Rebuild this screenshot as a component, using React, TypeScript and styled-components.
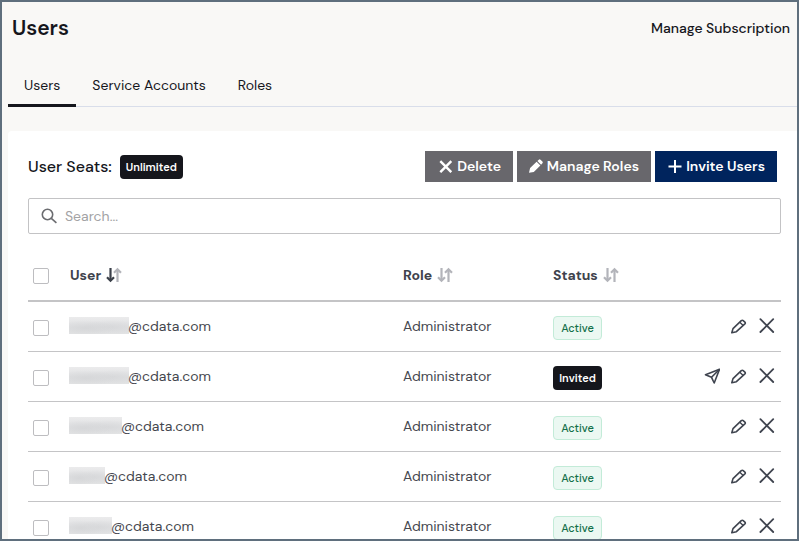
import React, { useState } from "react";
import styled, { createGlobalStyle, css } from "styled-components";

const GlobalStyle = createGlobalStyle`
  *, *::before, *::after { box-sizing: border-box; }
  body {
    margin: 0;
    background: #f9f8f6;
    color: #15161c;
    font: 400 14px/20px "DM Sans", Inter, sans-serif;
  }
  button, input { font: inherit; }
`;

const Frame = styled.div`
  height: 100vh;
  overflow: hidden;
  border: 2px solid #5f6f7d;
  padding-left: 6px;
  display: flex;
  flex-direction: column;
`;

const Header = styled.header`
  display: flex;
  align-items: center;
  justify-content: space-between;
  height: 52px;
  padding: 0 7px 0 4px;
  flex: none;
`;

const Title = styled.h1`
  margin: 0;
  font-size: 21px;
  line-height: 28px;
  font-weight: 600;
`;

const HeaderLink = styled.a`
  color: inherit;
  font-weight: 500;
  text-decoration: none;
`;

const Tabs = styled.nav`
  display: flex;
  flex: none;
  height: 53px;
  border-bottom: 1px solid #d9deea;
  margin-bottom: 24px;
`;

const Tab = styled.a<{ $active?: boolean }>`
  display: flex;
  align-items: center;
  height: 53px;
  padding: 12px 16px 0;
  color: inherit;
  text-decoration: none;
  border-bottom: 3px solid ${(p) => (p.$active ? "#15161c" : "transparent")};
`;

const Panel = styled.main`
  flex: 1 0 auto;
  background: #fff;
  border-top-left-radius: 4px;
  padding: 20px 16px 0 20px;
`;

const Toolbar = styled.div`
  display: flex;
  align-items: center;
  justify-content: space-between;
  padding-right: 4px;
  margin-bottom: 16px;
`;

const Seats = styled.div`
  display: flex;
  align-items: center;
  gap: 8px;
  font-size: 16px;
  font-weight: 500;
`;

const Badge = styled.span<{ $tone: "dark" | "green" }>`
  display: inline-flex;
  align-items: center;
  justify-content: center;
  height: 24px;
  padding: 0 6px;
  border-radius: 4px;
  font-size: 11px;
  line-height: 16px;
  ${(p) =>
    p.$tone === "dark"
      ? css`
          background: #15161c;
          color: #fff;
          font-weight: 600;
        `
      : css`
          background: #ebf8f2;
          color: #13704a;
          font-weight: 500;
          border: 1px solid #c3ebd8;
        `}
`;

const StatusBadge = styled(Badge)`
  min-width: 49px;
  vertical-align: middle;
`;

const SeatBadge = styled(Badge)`
  min-width: 63px;
`;

const Actions = styled.div`
  display: flex;
  gap: 4px;
`;

const ActionButton = styled.button<{ $width: number; $primary?: boolean }>`
  display: flex;
  align-items: center;
  justify-content: flex-end;
  gap: 4px;
  height: 31px;
  min-width: ${(p) => p.$width}px;
  padding: 0 12px 2px 8px;
  border: 0;
  color: #fff;
  font-weight: 600;
  white-space: nowrap;
  background: ${(p) => (p.$primary ? "#00245d" : "#68676c")};
  svg { flex: none; }
`;

const SearchBox = styled.label`
  display: flex;
  align-items: center;
  gap: 7px;
  height: 36px;
  padding: 0 12px;
  border: 1px solid #c3c3c5;
  border-radius: 2px;
  margin-bottom: 16px;
  color: #6b6c70;
`;

const SearchInput = styled.input`
  flex: 1;
  min-width: 0;
  border: 0;
  padding: 0;
  outline: 0;
  background: transparent;
  color: #15161c;
  &::placeholder { color: #a3a3a5; opacity: 1; }
`;

const Table = styled.table`
  width: 100%;
  table-layout: fixed;
  border-collapse: separate;
  border-spacing: 0;
  color: #46484f;
`;

const HeadCell = styled.th<{ $width?: number }>`
  height: 52px;
  width: ${(p) => (p.$width ? `${p.$width}px` : "auto")};
  padding: 0;
  text-align: left;
  font-weight: 700;
  color: #3f434d;
  border-bottom: 2px solid #c4c4c6;
`;

const Cell = styled.td`
  height: 50px;
  padding: 0;
  border-bottom: 1px solid #c4c4c6;
`;

const TextCell = styled(Cell)`
  padding-bottom: 2px;
`;

const StatusCell = styled(Cell)`
  padding-top: 2px;
`;

const SortButton = styled.button`
  display: flex;
  align-items: center;
  gap: 5px;
  padding: 0;
  border: 0;
  background: none;
  color: inherit;
  font-weight: 700;
`;

const Check = styled.input`
  appearance: none;
  display: block;
  width: 16px;
  height: 16px;
  margin: 2px 0 0 5px;
  border: 1px solid #bdbdc0;
  border-radius: 2px;
  background: #fff;
  &:checked { background: #00245d; }
`;

const Email = styled.div`
  display: flex;
  align-items: center;
`;

const HiddenName = styled.span<{ $width: number }>`
  width: ${(p) => p.$width}px;
  height: 17px;
  margin: 0 -1px;
  background:
    radial-gradient(ellipse at 28% 65%, #d6d7d9 0, transparent 50%),
    radial-gradient(ellipse at 72% 60%, #d8d9db 0, transparent 50%),
    linear-gradient(#ebebec, #dfe0e2 60%, #e2e3e4);
`;

const RowActions = styled.div`
  display: flex;
  align-items: flex-start;
  justify-content: flex-end;
  gap: 10px;
  padding-right: 6px;
`;

const IconButton = styled.button`
  display: flex;
  padding: 0;
  border: 0;
  background: none;
  color: #3f444f;
`;

const SortIcon = ({ down = false }: { down?: boolean }) => (
  <svg width="16" height="16" viewBox="0 0 16 16" fill="none" strokeWidth="2.2" aria-hidden="true">
    <g stroke={down ? "#3b404a" : "#b3b4ba"}>
      <path d="M4.5 1V13" />
      <path d="M1 10.2 4.5 13.7 8 10.2" />
    </g>
    <g stroke="#b3b4ba">
      <path d="M11.5 15V3" />
      <path d="M8 5.8 11.5 2.3 15 5.8" />
    </g>
  </svg>
);

const SearchIcon = () => (
  <svg width="17" height="17" viewBox="0 0 17 17" fill="none" stroke="currentColor" strokeWidth="1.6" aria-hidden="true">
    <circle cx="6.5" cy="6.5" r="5.2" />
    <path d="M10.3 10.3 15.4 14.8" />
  </svg>
);

const CrossIcon = () => (
  <svg width="16" height="17" viewBox="0 0 16 17" fill="none" stroke="currentColor" strokeWidth="1.8" strokeLinecap="round" aria-hidden="true">
    <path d="M1.4 2.2 14.2 15M14.2 2.2 1.4 15" />
  </svg>
);

const BoldCrossIcon = () => (
  <svg width="14" height="14" viewBox="0 0 14 14" fill="none" stroke="currentColor" strokeWidth="2.4" aria-hidden="true">
    <path d="M1.3 2.2 12.3 13.2M12.3 2.2 1.3 13.2" />
  </svg>
);

const SolidPencilIcon = () => (
  <svg width="14" height="14" viewBox="0 0 14 14" fill="currentColor" aria-hidden="true">
    <path d="M0 13.8 1.1 9 7.6 2.8 11.4 6.6 4.8 12.9ZM8.4 2 9.8.7Q10.7 0 11.5.7L13.4 2.6Q14.1 3.4 13.4 4.3L12.1 5.8Z" />
  </svg>
);

const PlusIcon = () => (
  <svg width="14" height="14" viewBox="0 0 14 14" stroke="currentColor" strokeWidth="2" aria-hidden="true">
    <path d="M7 1V14M.5 7.5H13.5" />
  </svg>
);

const PencilIcon = () => (
  <svg width="19" height="17" viewBox="0 0 19 17" fill="none" stroke="currentColor" strokeWidth="1.6" strokeLinejoin="round" aria-hidden="true">
    <path d="M1.8 15.8 3 11.6 11.3 3.7Q12.3 2.8 13.2 3.6L14.9 5.1Q15.8 6 14.9 6.9L6.4 14.7Z" />
    <path d="M9.8 5.2 13.2 8.4" strokeWidth="1.4" />
  </svg>
);

const SendIcon = () => (
  <svg width="16" height="17" viewBox="0 0 16 17" fill="none" stroke="currentColor" strokeWidth="1.6" strokeLinejoin="round" aria-hidden="true">
    <path d="M15.5 2.3 1.5 7.7 7.5 10.3 10.2 16Z" />
    <path d="M15.5 2.3 7.5 10.3" />
  </svg>
);

const users = [
  { id: 1, nameWidth: 60, status: "Active" },
  { id: 2, nameWidth: 60, status: "Invited" },
  { id: 3, nameWidth: 53, status: "Active" },
  { id: 4, nameWidth: 36, status: "Active" },
  { id: 5, nameWidth: 43, status: "Active" },
];

export default function App() {
  const [selected, setSelected] = useState<number[]>([]);
  const toggle = (id: number) =>
    setSelected((s) => (s.includes(id) ? s.filter((x) => x !== id) : [...s, id]));
  const all = selected.length === users.length;

  return (
    <>
      <GlobalStyle />
      <Frame>
        <Header>
          <Title>Users</Title>
          <HeaderLink href="#subscription">Manage Subscription</HeaderLink>
        </Header>
        <Tabs>
          <Tab href="#users" $active aria-current="page">Users</Tab>
          <Tab href="#service-accounts">Service Accounts</Tab>
          <Tab href="#roles">Roles</Tab>
        </Tabs>
        <Panel>
          <Toolbar>
            <Seats>
              User Seats: <SeatBadge $tone="dark">Unlimited</SeatBadge>
            </Seats>
            <Actions>
              <ActionButton type="button" $width={88}><BoldCrossIcon />Delete</ActionButton>
              <ActionButton type="button" $width={134}><SolidPencilIcon />Manage Roles</ActionButton>
              <ActionButton type="button" $width={122} $primary><PlusIcon />Invite Users</ActionButton>
            </Actions>
          </Toolbar>
          <SearchBox>
            <SearchIcon />
            <SearchInput type="text" placeholder="Search..." aria-label="Search users" />
          </SearchBox>
          <Table>
            <thead>
              <tr>
                <HeadCell $width={42}>
                  <Check
                    type="checkbox"
                    aria-label="Select all users"
                    checked={all}
                    onChange={() => setSelected(all ? [] : users.map((u) => u.id))}
                  />
                </HeadCell>
                <HeadCell><SortButton type="button">User <SortIcon down /></SortButton></HeadCell>
                <HeadCell $width={150}><SortButton type="button">Role <SortIcon /></SortButton></HeadCell>
                <HeadCell $width={150}><SortButton type="button">Status <SortIcon /></SortButton></HeadCell>
                <HeadCell $width={78} aria-label="Actions" />
              </tr>
            </thead>
            <tbody>
              {users.map((u) => (
                <tr key={u.id}>
                  <Cell>
                    <Check
                      type="checkbox"
                      aria-label={`Select user ${u.id}`}
                      checked={selected.includes(u.id)}
                      onChange={() => toggle(u.id)}
                    />
                  </Cell>
                  <TextCell>
                    <Email><HiddenName $width={u.nameWidth} />@cdata.com</Email>
                  </TextCell>
                  <TextCell>Administrator</TextCell>
                  <StatusCell>
                    <StatusBadge $tone={u.status === "Invited" ? "dark" : "green"}>{u.status}</StatusBadge>
                  </StatusCell>
                  <TextCell>
                    <RowActions>
                      {u.status === "Invited" && (
                        <IconButton type="button" aria-label="Resend invite"><SendIcon /></IconButton>
                      )}
                      <IconButton type="button" aria-label="Edit user"><PencilIcon /></IconButton>
                      <IconButton type="button" aria-label="Remove user"><CrossIcon /></IconButton>
                    </RowActions>
                  </TextCell>
                </tr>
              ))}
            </tbody>
          </Table>
        </Panel>
      </Frame>
    </>
  );
}
